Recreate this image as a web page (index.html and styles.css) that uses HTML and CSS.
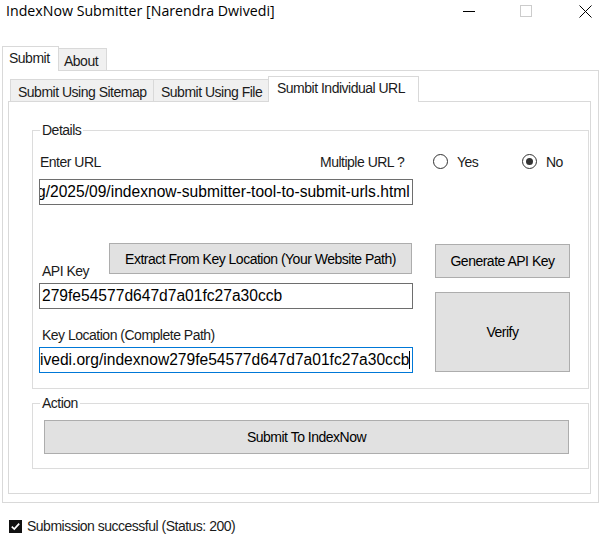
FILE: index.html
```html
<!DOCTYPE html>
<html lang="en">
<head>
<meta charset="utf-8">
<title>IndexNow Submitter</title>
<link rel="stylesheet" href="styles.css">
</head>
<body>
<div class="window">
  <header class="titlebar">
    <div class="title">IndexNow Submitter [Narendra Dwivedi]</div>
    <div class="controls">
      <svg class="ctl ctl-min" width="12" height="12" viewBox="0 0 12 12"><path d="M0 6.5H12" stroke="#000" stroke-width="1"/></svg>
      <svg class="ctl ctl-max" width="12" height="12" viewBox="0 0 12 12"><rect x="0.5" y="0.5" width="11" height="11" fill="none" stroke="#cccccc" stroke-width="1"/></svg>
      <svg class="ctl ctl-close" width="13" height="13" viewBox="0 0 13 13"><path d="M0.5 0.5L12.5 12.5M12.5 0.5L0.5 12.5" stroke="#000" stroke-width="1"/></svg>
    </div>
  </header>

  <div class="outer-tabs">
    <div class="tabrow outer-row">
      <div class="tab outer-tab tab-active outer-active">Submit</div>
      <div class="tab outer-tab outer-about">About</div>
    </div>
    <div class="outer-panel">
      <div class="inner-tabs">
        <div class="tabrow inner-row">
          <div class="tab inner-tab tab-sitemap">Submit Using Sitemap</div>
          <div class="tab inner-tab tab-file">Submit Using File</div>
          <div class="tab inner-tab tab-active inner-active">Sumbit Individual URL</div>
        </div>
        <div class="inner-panel">
          <fieldset class="group details">
            <legend>Details</legend>
            <div class="url-head">
              <span class="lbl lbl-url">Enter URL</span>
              <span class="lbl">Multiple URL ?</span>
              <span class="opt"><span class="radio"></span><span class="lbl">Yes</span></span>
              <span class="opt"><span class="radio radio-on"></span><span class="lbl">No</span></span>
            </div>
            <div class="textbox tb-url">g/2025/09/indexnow-submitter-tool-to-submit-urls.html</div>
            <div class="keys">
              <div class="keys-left">
                <div class="apikey-head">
                  <span class="lbl lbl-api">API Key</span>
                  <button class="btn btn-extract">Extract From Key Location (Your Website Path)</button>
                </div>
                <div class="textbox tb-key">279fe54577d647d7a01fc27a30ccb</div>
                <div class="lbl lbl-loc">Key Location (Complete Path)</div>
                <div class="textbox tb-loc textbox-focus">ivedi.org/indexnow279fe54577d647d7a01fc27a30ccb<span class="caret"></span></div>
              </div>
              <div class="keys-right">
                <button class="btn btn-gen">Generate API Key</button>
                <button class="btn btn-verify">Verify</button>
              </div>
            </div>
          </fieldset>
          <fieldset class="group action">
            <legend>Action</legend>
            <button class="btn btn-submit">Submit To IndexNow</button>
          </fieldset>
        </div>
      </div>
    </div>
  </div>

  <div class="status">
    <svg class="check" width="13" height="13" viewBox="0 0 13 13"><rect x="0" y="0" width="13" height="13" fill="#111"/><path d="M2.8 6.6L5.3 9.1L10.2 3.6" fill="none" stroke="#fff" stroke-width="1.7"/></svg>
    <span class="lbl">Submission successful (Status: 200)</span>
  </div>
</div>
</body>
</html>
```

FILE: styles.css
```css
* { box-sizing: border-box; }

html, body {
  margin: 0;
  padding: 0;
  background: #ffffff;
}

body {
  width: 610px;
  height: 540px;
  overflow: hidden;
  font-family: "Liberation Sans", Arial, sans-serif;
  font-size: 14px;
  letter-spacing: -0.5px;
  color: #1b1b1b;
}

/* ---------- title bar ---------- */
.titlebar {
  height: 46px;
  display: flex;
  align-items: flex-start;
}

.title {
  font-family: "Open Sans", "Noto Sans", sans-serif;
  font-size: 14.2px;
  letter-spacing: 0;
  line-height: 20px;
  padding: 1px 0 0 6px;
  color: #000;
}

.controls {
  margin-left: auto;
  display: flex;
  align-items: flex-start;
  padding: 5px 18px 0 0;
}

.ctl { display: block; }
.ctl-min { margin-right: 45px; }
.ctl-max { margin-right: 47px; }

/* ---------- tabs ---------- */
.tabrow {
  display: flex;
  align-items: flex-end;
  position: relative;
  z-index: 1;
  margin-bottom: -1px;
}

.tab {
  background: #f0f0f0;
  border: 1px solid #d9d9d9;
  border-bottom: none;
  line-height: 16px;
  white-space: nowrap;
  color: #1b1b1b;
}

.tab + .tab { margin-left: -1px; }

.tab-active {
  background: #ffffff;
  position: relative;
  z-index: 2;
}

.outer-row {
  height: 25px;
  padding-left: 2px;
}

.outer-tab {
  height: 22px;
  margin-bottom: 1px;
  padding: 4px 0 0 5px;
}

.outer-active {
  width: 57px;
  height: 25px;
  margin-bottom: 0;
  padding: 3px 0 0 6px;
}

.outer-about { width: 49px; }

.outer-panel {
  margin-left: 2px;
  width: 597px;
  height: 433px;
  border: 1px solid #d9d9d9;
  padding: 5px 0 0 5px;
}

.inner-row {
  height: 26px;
  padding-left: 2px;
}

.inner-tab {
  height: 22px;
  margin-bottom: 1px;
  padding: 4px 0 0 7px;
}

.tab-sitemap { width: 144px; }
.tab-file { width: 116px; }

.inner-active {
  width: 151px;
  height: 26px;
  margin-bottom: 0;
  padding: 3px 0 0 8px;
}

.inner-panel {
  width: 583px;
  height: 393px;
  border: 1px solid #d9d9d9;
  padding: 0 0 0 23px;
}

/* ---------- group boxes ---------- */
.group {
  margin: 0;
  padding: 0 0 0 6px;
  width: 557px;
  min-width: 0;
  border: 1px solid #dcdcdc;
}

.group legend {
  margin-left: 1px;
  padding: 0 2px;
  line-height: 16px;
  color: #1b1b1b;
}

.details {
  margin-top: 20px;
  padding-bottom: 15px;
}

.action {
  margin-top: 6px;
  padding-bottom: 14px;
}

.lbl {
  line-height: 16px;
  white-space: nowrap;
}

/* row 1 */
.url-head {
  margin-top: 15px;
  height: 18px;
  display: grid;
  grid-template-columns: 281px 113px 89px auto;
  align-items: center;
}

.url-head .lbl { line-height: 18px; }
.lbl-url { padding-left: 1px; }

.opt {
  display: flex;
  align-items: center;
}

.radio {
  width: 15px;
  height: 15px;
  border: 1px solid #333333;
  border-radius: 50%;
  margin-right: 9px;
  margin-bottom: 1px;
  display: flex;
  align-items: center;
  justify-content: center;
  background: #fff;
}

.radio-on::after {
  content: "";
  width: 7px;
  height: 7px;
  border-radius: 50%;
  background: #333333;
}

/* text boxes */
.textbox {
  width: 374px;
  height: 26px;
  border: 1px solid #6e6e6e;
  font-size: 15.6px;
  letter-spacing: 0;
  line-height: 24px;
  color: #000;
  white-space: nowrap;
  overflow: hidden;
  padding: 0 0 0 2px;
  background: #fff;
}

.tb-url {
  margin-top: 8px;
  padding-left: 0;
  text-indent: -3px;
}

.tb-key { margin-top: 4px; }

.textbox-focus {
  border-color: #0078d7;
  padding-left: 0;
  margin-top: 4px;
}

.caret {
  display: inline-block;
  width: 1px;
  height: 18px;
  background: #000;
  vertical-align: -4px;
}

/* keys area */
.keys {
  margin-top: 38px;
  display: grid;
  grid-template-columns: 374px 135px;
  column-gap: 22px;
  align-items: start;
}

.apikey-head {
  display: flex;
  align-items: flex-start;
  height: 36px;
}

.lbl-api {
  flex: 0 0 70px;
  margin-top: 20px;
  padding-left: 3px;
}

.lbl-loc {
  margin-top: 18px;
  padding-left: 3px;
}

.keys-right {
  margin-top: 1px;
  display: flex;
  flex-direction: column;
}

/* buttons */
.btn {
  font: inherit;
  letter-spacing: inherit;
  color: #000;
  background: #e1e1e1;
  border: 1px solid #adadad;
  padding: 0;
  margin: 0;
  white-space: nowrap;
}

.btn-extract {
  width: 303px;
  height: 31px;
}

.btn-gen {
  width: 135px;
  height: 34px;
}

.btn-verify {
  width: 135px;
  height: 80px;
  margin-top: 14px;
}

.btn-submit {
  display: block;
  margin: 9px 0 0 5px;
  width: 525px;
  height: 34px;
}

/* status line */
.status {
  margin-top: 15px;
  height: 16px;
  display: flex;
  align-items: center;
  padding-left: 9px;
}

.check {
  display: block;
  margin-right: 5px;
}
```
